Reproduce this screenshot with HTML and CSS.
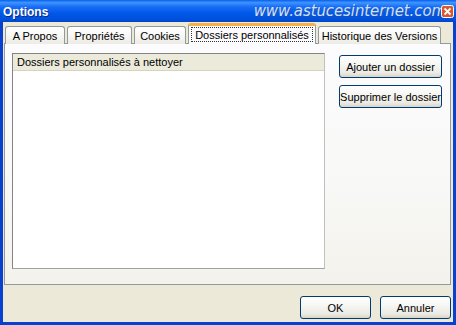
FILE: index.html
```html
<!DOCTYPE html>
<html lang="fr">
<head>
<meta charset="utf-8">
<title>Options</title>
<link rel="stylesheet" href="styles.css">
</head>
<body>
<div class="window">
  <div class="titlebar">
    <span class="title">Options</span>
    <span class="wm">www.astucesinternet.com</span>
    <span class="close"><svg width="13" height="13" viewBox="0 0 13 13"><rect x="0.5" y="0.5" width="12" height="12" rx="2" fill="#d9582f" stroke="#fff"/><path d="M3.5 3.5 L9.5 9.5 M9.5 3.5 L3.5 9.5" stroke="#fff" stroke-width="1.8"/></svg></span>
  </div>
  <div class="frame">
    <div class="body">
      <div class="tabs">
        <div class="tab t1">A Propos</div>
        <div class="tab t2">Propriétés</div>
        <div class="tab t3">Cookies</div>
        <div class="tab sel"><span class="focus">Dossiers personnalisés</span></div>
        <div class="tab t5">Historique des Versions</div>
      </div>
      <div class="panel">
        <div class="listbox">
          <div class="lhead">Dossiers personnalisés à nettoyer</div>
          <div class="lbody"></div>
        </div>
        <div class="side">
          <button class="btn side-btn">Ajouter un dossier</button>
          <button class="btn side-btn">Supprimer le dossier</button>
        </div>
      </div>
      <div class="footer">
        <button class="btn foot-btn">OK</button>
        <button class="btn foot-btn">Annuler</button>
      </div>
    </div>
  </div>
</div>
</body>
</html>
```
FILE: styles.css
```css
html, body { margin: 0; padding: 0; }
body {
  width: 456px;
  height: 325px;
  overflow: hidden;
  font-family: "Liberation Sans", Arial, sans-serif;
  font-size: 11px;
  color: #000;
  background: #ece9d8;
}
.window {
  width: 456px;
  height: 325px;
  display: flex;
  flex-direction: column;
}
.titlebar {
  height: 22px;
  flex: none;
  display: flex;
  align-items: center;
  background: linear-gradient(to bottom, #0a5fe9 0%, #3d95ff 12%, #1a6ef7 30%, #0058e8 60%, #0050dc 88%, #0046c6 100%);
  padding-left: 3px;
  padding-right: 2px;
}
.title {
  font-family: "Liberation Sans", Arial, sans-serif;
  font-weight: bold;
  font-size: 12px;
  color: #fff;
  text-shadow: 1px 1px 0 #0a2a8a;
  padding-top: 1px;
}
.wm {
  margin-left: auto;
  font-family: "DejaVu Sans", Verdana, sans-serif;
  font-style: italic;
  font-size: 15px;
  color: #cfe0ff;
  text-shadow: 1px 1px 0 #1f4fa8;
  letter-spacing: -0.1px;
  margin-right: -5px;
}
.close {
  display: flex;
  width: 13px;
  height: 13px;
}
.frame {
  flex: 1;
  display: flex;
  border-left: 3px solid #0841d0;
  border-right: 3px solid #0841d0;
  border-bottom: 3px solid #0841d0;
}
.body {
  flex: 1;
  display: flex;
  flex-direction: column;
  background: #ece9d8;
  padding: 2px 2px 0 1px;
}
.tabs {
  display: flex;
  align-items: flex-end;
  height: 20px;
  padding-left: 1px;
  margin-bottom: -1px;
  position: relative;
  z-index: 1;
}
.tab {
  height: 18px;
  box-sizing: border-box;
  border: 1px solid #919b9c;
  border-bottom: none;
  border-radius: 3px 3px 0 0;
  background: linear-gradient(to bottom, #ffffff 0%, #f7f7f4 50%, #ecebe4 100%);
  display: flex;
  align-items: center;
  justify-content: center;
  margin-right: 2px;
  padding-top: 1px;
}
.t1 { width: 60px; }
.t2 { width: 65px; }
.t3 { width: 52px; }
.t5 { width: 123px; }
.tab.sel {
  width: 128px;
  height: 21px;
  border-top: 3px solid #f7b045;
  background: #fcfcfe;
  padding-top: 0;
  align-items: flex-start;
}
.focus {
  margin-top: 1px;
  width: 122px;
  height: 15px;
  box-sizing: border-box;
  border: 1px dotted #333;
  display: flex;
  align-items: center;
  justify-content: center;
}
.panel {
  height: 242px;
  box-sizing: border-box;
  border: 1px solid #919b9c;
  background: linear-gradient(to bottom, #fcfcfe 0%, #f8f8f6 60%, #f3f2ec 100%);
  display: flex;
  align-items: flex-start;
  padding: 9px 0 0 7px;
}
.listbox {
  width: 313px;
  height: 216px;
  box-sizing: border-box;
  border: 1px solid;
  border-color: #848484 #c0c0c0 #a0a0a0 #848484;
  background: #fff;
  display: flex;
  flex-direction: column;
}
.lhead {
  height: 17px;
  box-sizing: border-box;
  background: #ebeadb;
  border-bottom: 1px solid #d6d2c2;
  padding-left: 4px;
  display: flex;
  align-items: center;
}
.lbody { flex: 1; }
.side {
  display: flex;
  flex-direction: column;
  gap: 7px;
  margin-left: 14px;
  margin-top: 2px;
}
.btn {
  font-family: "Liberation Sans", Arial, sans-serif;
  font-size: 11px;
  color: #000;
  box-sizing: border-box;
  border: 1px solid #003c74;
  border-radius: 3px;
  background: linear-gradient(to bottom, #ffffff 0%, #f6f6f3 40%, #eceae3 80%, #d8d4c8 100%);
  padding: 0;
  margin: 0;
  height: 23px;
}
.side-btn { width: 103px; }
.footer {
  display: flex;
  justify-content: flex-end;
  gap: 9px;
  padding-top: 11px;
}
.foot-btn { width: 71px; }
```
